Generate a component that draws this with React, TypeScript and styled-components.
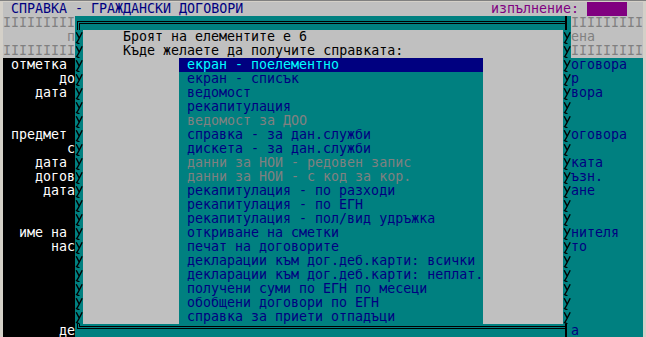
import styled, { createGlobalStyle } from "styled-components";

const GlobalStyle = createGlobalStyle`
  html, body {
    margin: 0;
    padding: 0;
    background: #d4d0c8;
  }
  body {
    font-family: "DejaVu Sans Mono", "Liberation Mono", monospace;
    font-size: 13.3px;
  }
`;

const Window = styled.div`
  width: 646px;
  height: 337px;
  box-sizing: border-box;
  padding: 1px 3px 0;
  border-top: 1px solid #808080;
  background: #d4d0c8;
  overflow: hidden;
`;

const Screen = styled.div`
  width: 640px;
  display: flex;
  flex-direction: column;
  line-height: 14px;
  white-space: pre;
`;

const TitleBar = styled.div`
  display: flex;
  height: 14px;
  background: #c0c0c0;
`;

const Title = styled.span`
  flex: 1;
  padding-left: 8px;
  color: #000080;
`;

const Status = styled.span`
  color: #800080;
`;

const StatusSwatch = styled.span`
  width: 40px;
  margin: 0 16px 0 8px;
  background: #800080;
`;

const Body = styled.div`
  display: flex;
  height: 322px;
`;

const Side = styled.div<{ $align: "left" | "right" }>`
  width: 72px;
  display: flex;
  flex-direction: column;
  text-align: ${(p) => p.$align};
`;

type Tone = "form" | "dark" | "teal";

const tones: Record<Tone, { bg: string; fg: string }> = {
  form: { bg: "#c0c0c0", fg: "#808080" },
  dark: { bg: "#000000", fg: "#ffffff" },
  teal: { bg: "#008080", fg: "#000080" },
};

const SideRow = styled.div<{ $tone: Tone }>`
  height: 14px;
  overflow: hidden;
  background: ${(p) => tones[p.$tone].bg};
  color: ${(p) => tones[p.$tone].fg};
`;

const Dialog = styled.div`
  width: 496px;
  display: grid;
  grid-template-columns: 8px 480px 8px;
  grid-template-rows: 14px 294px 14px;
  background: #008080;
`;

const Edge = styled.svg`
  grid-column: 1 / -1;
  display: block;
`;

const Rail = styled.div`
  display: flex;
  flex-direction: column;
`;

const Panel = styled.div`
  background: #c0c0c0;
  display: flex;
  flex-direction: column;
`;

const Prompt = styled.div`
  height: 14px;
  padding-left: 40px;
  color: #000000;
`;

const Menu = styled.ul`
  list-style: none;
  margin: 0 0 0 96px;
  padding: 0;
  width: 304px;
  background: #008080;
`;

type ItemState = "selected" | "normal" | "disabled";

const MenuItem = styled.li<{ $state: ItemState }>`
  height: 14px;
  padding-left: 8px;
  overflow: hidden;
  background: ${(p) => (p.$state === "selected" ? "#000080" : "transparent")};
  color: ${(p) =>
    p.$state === "selected" ? "#00ffff" : p.$state === "disabled" ? "#808080" : "#000080"};
`;

const DOTS = "ÏÏÏÏÏÏÏÏÏ";

const leftRows: [Tone, string][] = [
  ["form", DOTS],
  ["form", "п"],
  ["form", DOTS],
  ["dark", "отметка "],
  ["dark", "до"],
  ["dark", "дата "],
  ["dark", ""],
  ["dark", ""],
  ["dark", "предмет "],
  ["dark", "с"],
  ["dark", "дата "],
  ["dark", "догов"],
  ["dark", "дата"],
  ["dark", ""],
  ["dark", ""],
  ["dark", "име на "],
  ["dark", "нас"],
  ["dark", ""],
  ["dark", ""],
  ["dark", ""],
  ["dark", ""],
  ["dark", ""],
  ["dark", "де"],
];

const rightRows: [Tone, string][] = [
  ["form", DOTS],
  ["form", "ена"],
  ["form", DOTS],
  ["teal", "оговора"],
  ["teal", "р"],
  ["teal", "вора"],
  ["teal", ""],
  ["teal", ""],
  ["teal", "оговора"],
  ["teal", ""],
  ["teal", "ката"],
  ["teal", "ъзн."],
  ["teal", "ане"],
  ["teal", ""],
  ["teal", ""],
  ["teal", "нителя"],
  ["teal", "то"],
  ["teal", ""],
  ["teal", ""],
  ["teal", ""],
  ["teal", ""],
  ["teal", ""],
  ["teal", "а"],
];

const items: [ItemState, string][] = [
  ["selected", "екран - поелементно"],
  ["normal", "екран - списък"],
  ["normal", "ведомост"],
  ["normal", "рекапитулация"],
  ["disabled", "ведомост за ДОО"],
  ["normal", "справка - за дан.служби"],
  ["normal", "дискета - за дан.служби"],
  ["disabled", "данни за НОИ - редовен запис"],
  ["disabled", "данни за НОИ - с код за кор."],
  ["normal", "рекапитулация - по разходи"],
  ["normal", "рекапитулация - по ЕГН"],
  ["normal", "рекапитулация - пол/вид удръжка"],
  ["normal", "откриване на сметки"],
  ["normal", "печат на договорите"],
  ["normal", "декларации към дог.деб.карти: всички"],
  ["normal", "декларации към дог.деб.карти: неплат."],
  ["normal", "получени суми по ЕГН по месеци"],
  ["normal", "обобщени договори по ЕГН"],
  ["normal", "справка за приети отпадъци"],
];

// the frame's vertical char, shown as a hooked "у" in this code page
function RailGlyph() {
  return (
    <svg width="8" height="14" viewBox="0 0 8 14" style={{ display: "block" }}>
      <path
        d="M1.2 2.2 L4 7.6 M7.2 2.2 L3.8 9 Q2.6 11.4 1.6 12.6 L4.4 14"
        fill="none"
        stroke="#000"
        strokeWidth="1.4"
      />
    </svg>
  );
}

function GlyphRail() {
  return (
    <Rail>
      {Array.from({ length: 21 }, (_, i) => (
        <RailGlyph key={i} />
      ))}
    </Rail>
  );
}

function TopEdge() {
  return (
    <Edge width="496" height="14" viewBox="0 0 496 14" shapeRendering="crispEdges">
      <g stroke="#000" strokeWidth="1" fill="none">
        <path d="M2.5 14 V5.5 H490" />
        <path d="M4.5 14 V7.5 H490" />
      </g>
      <rect x="490" y="0" width="2" height="14" fill="#000" />
    </Edge>
  );
}

function BottomEdge() {
  return (
    <Edge width="496" height="14" viewBox="0 0 496 14" shapeRendering="crispEdges">
      <g stroke="#000" strokeWidth="1" fill="none">
        <path d="M2.5 0 V4.5 H490" />
        <path d="M4.5 0 V2.5 H490" />
      </g>
      <rect x="490" y="0" width="2" height="14" fill="#000" />
    </Edge>
  );
}

export default function App() {
  return (
    <>
      <GlobalStyle />
      <Window>
        <Screen>
          <TitleBar>
            <Title>СПРАВКА - ГРАЖДАНСКИ ДОГОВОРИ</Title>
            <Status>изпълнение:</Status>
            <StatusSwatch />
          </TitleBar>
          <Body>
            <Side $align="right">
              {leftRows.map(([tone, text], i) => (
                <SideRow key={i} $tone={tone}>
                  {text}
                </SideRow>
              ))}
            </Side>
            <Dialog>
              <TopEdge />
              <GlyphRail />
              <Panel>
                <Prompt>Броят на елементите е 6</Prompt>
                <Prompt>Къде желаете да получите справката:</Prompt>
                <Menu>
                  {items.map(([state, label]) => (
                    <MenuItem key={label} $state={state}>
                      {label}
                    </MenuItem>
                  ))}
                </Menu>
              </Panel>
              <GlyphRail />
              <BottomEdge />
            </Dialog>
            <Side $align="left">
              {rightRows.map(([tone, text], i) => (
                <SideRow key={i} $tone={tone}>
                  {text}
                </SideRow>
              ))}
            </Side>
          </Body>
        </Screen>
      </Window>
    </>
  );
}
